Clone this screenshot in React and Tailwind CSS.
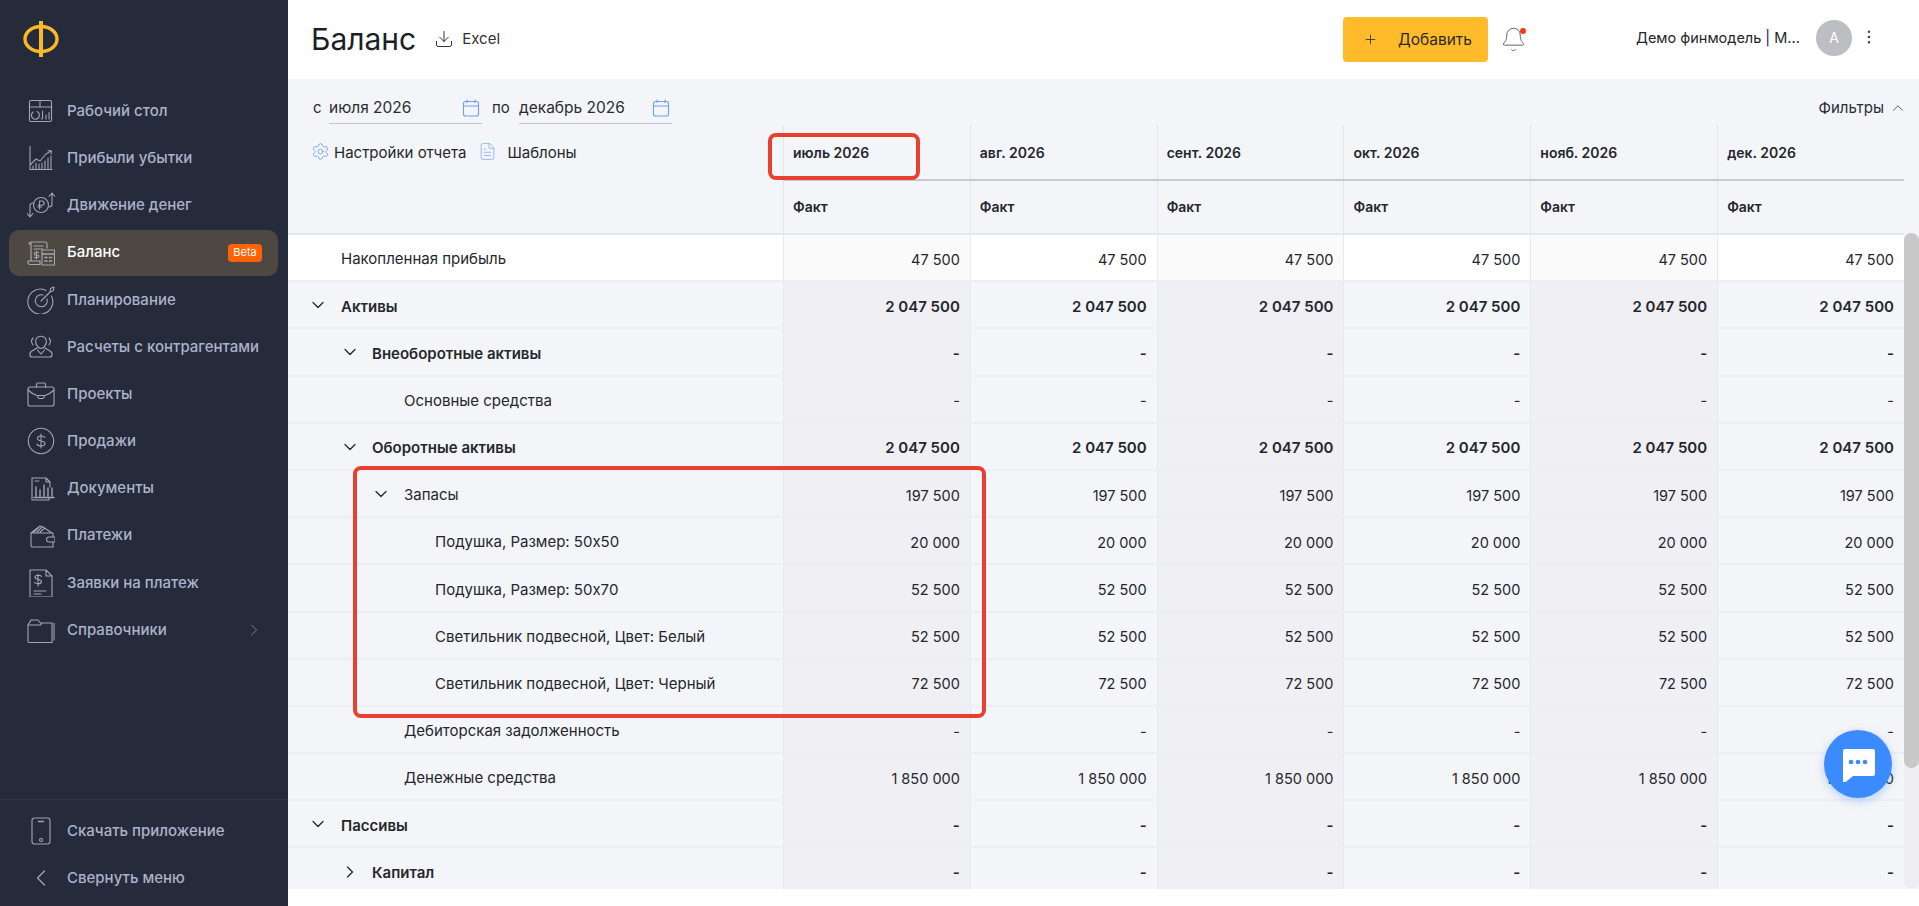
import React from "react";
import { ChevronDown, ChevronRight, ChevronLeft, ChevronUp, Plus, Download, Settings, FileText, Bell, EllipsisVertical } from "lucide-react";

const Ico = ({ children }) => (
  <svg width="28" height="28" viewBox="0 0 28 28" fill="none" stroke="#a3a6ae" strokeWidth="1.1" strokeLinecap="round" strokeLinejoin="round" className="shrink-0">
    {children}
  </svg>
);

const icons = {
  desk: (
    <Ico>
      <rect x="2.5" y="3.5" width="22" height="21" rx="1.5" />
      <path d="M2.5 10h22M13 3.5V10" />
      <path d="M6 15a4 4 0 1 0 4-.5M15.5 14v7a1 1 0 0 1-1 1M19 18v4M22 15.5V22" />
    </Ico>
  ),
  profit: (
    <Ico>
      <path d="M3 2.500v23h22M3 21l6-6 4 2 6-7 5-3M21 6.500l3.500.5-.5 3" />
      <path d="M6 25v-3M9 25v-6M12 25v-5M15 25v-6M18 25v-8M21 25v-11M24 25V12" />
    </Ico>
  ),
  money: (
    <Ico>
      <circle cx="14" cy="14" r="7.500" />
      <path d="M12.500 18v-8h2.500a2 2 0 0 1 0 4.200h-4M11 16h3.500" />
      <path d="M25 2l-3 3.500M25 2l3 3.500M25 2v11a3 3 0 0 1-3 3M3 26l-3-3.500M3 26l3-3.500M3 26V15a3 3 0 0 1 3-3" />
    </Ico>
  ),
  balance: (
    <Ico>
      <path d="M4 3h14a2 2 0 0 1 2 2v4M4 3a2 2 0 0 0-2 2h2M4 3v19M1 22h12v3.500H3a2 2 0 0 1-2-2zM7 7h9M7 10h9" strokeWidth="1.200" />
      <rect x="15" y="11" width="12.500" height="15" />
      <path d="M15 15h12.500M18 18.500h2M22.500 18.500h2M18 22h2M22.500 22h2" strokeWidth="1.600" />
      <path d="M9.500 12v8M11.500 13.500h-3a1.200 1.200 0 0 0 0 2.500h2a1.200 1.200 0 0 1 0 2.500h-3" />
    </Ico>
  ),
  plan: (
    <Ico>
      <path d="M19 4.500A12.500 12.500 0 1 0 24.500 10M16 9a6 6 0 1 0 4 4M14 15l9-9M23 6l.5-3.500L27 1l-.5 3.500L23 6" />
    </Ico>
  ),
  people: (
    <Ico>
      <path d="M10 12.500c-2-2-2-7 1-8.500 1.500-.7 4.500-.7 6 0 3 1.500 3 6.500 1 8.500-1 2-3 3-4 3s-3-1-4-3zM10 15l-5 3c-1.500.8-2.500 2-2 4 0 1 1 2 2 2h18c1 0 2-1 2-2 .5-2-.5-3.200-2-4l-5-3M10.500 17l3.500 4 3.500-4" />
      <path d="M6 5c-2 2-1.500 5 0 7M22 5c2 2 1.500 5 0 7" />
    </Ico>
  ),
  case: (
    <Ico>
      <rect x="1" y="7" width="26" height="19" rx="2" />
      <path d="M9.500 7V4.500a1.500 1.500 0 0 1 1.500-1.500h6a1.500 1.500 0 0 1 1.500 1.500V7M1 10c3 3 7 5 10 6M27 10c-3 3-7 5-10 6M11 15.500h6v1.500a1.500 1.500 0 0 1-1.500 1.500h-3A1.500 1.500 0 0 1 11 17z" />
    </Ico>
  ),
  sales: (
    <Ico>
      <circle cx="14" cy="14" r="12.700" />
      <path d="M14 7v14M18 10.500c-.5-1-2-1.500-4-1.500-2.500 0-3.500 1.500-3.500 2.500 0 3.500 7.500 1.500 7.500 5 0 1.500-1.500 2.500-4 2.500-2 0-3.500-.7-4-2" />
    </Ico>
  ),
  docs: (
    <Ico>
      <path d="M19 3H5v22h17v-2M19 3l4 4h-4zM23 7v5M8 6h4" />
      <path d="M9 12v9M13 15v6M17 10v11M21 13v8M25 13v8M7 22.500h20" strokeWidth="1.400" />
    </Ico>
  ),
  wallet: (
    <Ico>
      <path d="M4 11V23a2 2 0 0 0 2 2h20v-5M4 11h22v4M4 11l9-7 3 1 9 6M7 10l5-5M10 10l5-5M13 10l5-4M22 15h6v5h-6a2.500 2.500 0 0 1 0-5z" />
    </Ico>
  ),
  request: (
    <Ico>
      <path d="M3 1h16l6 6v21H3zM19 1v6h6M7 22h12M7 25h7" />
      <path d="M11 5v12M14.500 7.500c-.5-.8-1.700-1.200-3.500-1.200-2 0-3 1-3 2 0 3 6.500 1.500 6.500 4.500 0 1-1 2-3.500 2-2 0-3-.6-3.500-1.500" />
    </Ico>
  ),
  folder: (
    <Ico>
      <path d="M1 9v16a1.500 1.500 0 0 0 1.500 1.500H25V7H13.500L11 4H4L1 9h12.500L15 7M27 7v17" />
    </Ico>
  ),
};

const nav = [
  ["desk", "Рабочий стол"],
  ["profit", "Прибыли убытки"],
  ["money", "Движение денег"],
  ["balance", "Баланс", true],
  ["plan", "Планирование"],
  ["people", "Расчеты с контрагентами"],
  ["case", "Проекты"],
  ["sales", "Продажи"],
  ["docs", "Документы"],
  ["wallet", "Платежи"],
  ["request", "Заявки на платеж"],
  ["folder", "Справочники"],
];

function Sidebar() {
  return (
    <aside className="w-[288px] shrink-0 h-full bg-[#252b3a] flex flex-col">
      <div className="h-[87px] pl-[23px] pt-[21px] shrink-0">
        <svg width="36" height="36" viewBox="0 0 36 36" fill="none" stroke="#fdb827" strokeWidth="3.400">
          <ellipse cx="18" cy="18" rx="16" ry="12.500" />
          <path d="M18 0v36" strokeWidth="4" />
        </svg>
      </div>
      <nav className="flex flex-col pl-[9px] pr-[10px] pt-[1px] gap-[1.200px]">
        {nav.map(([icon, label, active]) => (
          <div
            key={label}
            className={`h-[46px] flex items-center gap-[12px] pl-[18px] rounded-[10px] ${active ? "bg-[#4d4842]" : ""}`}
          >
            {icons[icon]}
            <span className={`text-[15px] font-medium ${active ? "text-white" : "text-[#aab3c9]"}`}>{label}</span>
            {active && (
              <span className="ml-auto mr-[16px] h-[18px] w-[34px] rounded-[4px] bg-[#ff6207] text-white text-[11px] flex items-center justify-center">
                Beta
              </span>
            )}
            {icon === "folder" && <ChevronRight size={20} strokeWidth={1} className="ml-auto mr-[14px] text-[#8d93a0]" />}
          </div>
        ))}
      </nav>
      <div className="mt-auto border-t border-[#2f3646] pt-[8px] pb-[5px] px-[9px] flex flex-col gap-[1.200px]">
        <div className="h-[46px] flex items-center gap-[12px] pl-[18px]">
          <Ico>
            <rect x="5" y="1" width="18" height="26" rx="2.500" />
            <path d="M11.500 4.500h5" strokeWidth="1.500" />
            <circle cx="14" cy="23" r="1.500" />
          </Ico>
          <span className="text-[15px] font-medium text-[#aab3c9]">Скачать приложение</span>
        </div>
        <div className="h-[46px] flex items-center gap-[12px] pl-[18px]">
          <ChevronLeft size={28} strokeWidth={1.100} className="text-[#a3a6ae]" />
          <span className="text-[15px] font-medium text-[#aab3c9]">Свернуть меню</span>
        </div>
      </div>
    </aside>
  );
}

function Header() {
  return (
    <header className="h-[79px] shrink-0 bg-white flex items-center pl-[23px] pr-[41px]">
      <h1 className="text-[30px] text-[#1d1f26] leading-none -mt-[1px]">Баланс</h1>
      <Download size={20} strokeWidth={1.200} className="ml-[18px] -mt-[1px] text-[#333]" />
      <span className="ml-[8px] text-[15px] text-[#333]">Excel</span>
      <button className="ml-auto h-[45px] w-[145px] bg-[#ffbb29] rounded-[4px] flex items-center pl-[20px] text-[#2b2b2b] text-[15.500px]">
        <Plus size={15} strokeWidth={1.300} />
        <span className="ml-[20px]">Добавить</span>
      </button>
      <div className="relative ml-[12px] w-[28px] h-[28px]">
        <Bell size={27} strokeWidth={0.800} className="text-[#555]" />
        <span className="absolute right-[2px] top-[2px] w-[6px] h-[6px] rounded-full bg-[#f03a12]" />
      </div>
      <span className="ml-[108px] text-[14.500px] text-[#24262c] -mt-[4px] w-[170px] whitespace-nowrap">Демо финмодель | М...</span>
      <div className="ml-[10px] w-[36px] h-[36px] -mt-[4px] rounded-full bg-[#bdbec4] text-white text-[14px] flex items-center justify-center">A</div>
      <EllipsisVertical size={18} strokeWidth={1.500} className="ml-[8px] -mt-[6px] text-[#444]" />
    </header>
  );
}

const DateField = ({ value }) => (
  <div className="w-[153px] h-[32px] border-b border-[#c4c5cb] flex items-center justify-between pr-[2px]">
    <span className="text-[15.500px] text-[#2a2c33]">{value}</span>
    <svg width="18" height="18" viewBox="0 0 18 18" fill="none" stroke="#6aa0f5" strokeWidth="1.100">
      <rect x="1.500" y="2.500" width="15" height="14.500" rx="2" />
      <path d="M1.500 7h15M5 .5v3.500M13 .5v3.500" />
    </svg>
  </div>
);

const months = ["июль 2026", "авг. 2026", "сент. 2026", "окт. 2026", "нояб. 2026", "дек. 2026"];

const rows = [
  { label: "Накопленная прибыль", level: 0, value: "47 500", first: true },
  { label: "Активы", level: 0, value: "2 047 500", bold: true, arrow: "down" },
  { label: "Внеоборотные активы", level: 1, value: "-", bold: true, arrow: "down" },
  { label: "Основные средства", level: 2, value: "-" },
  { label: "Оборотные активы", level: 1, value: "2 047 500", bold: true, arrow: "down" },
  { label: "Запасы", level: 2, value: "197 500", arrow: "down" },
  { label: "Подушка, Размер: 50x50", level: 3, value: "20 000" },
  { label: "Подушка, Размер: 50x70", level: 3, value: "52 500" },
  { label: "Светильник подвесной, Цвет: Белый", level: 3, value: "52 500" },
  { label: "Светильник подвесной, Цвет: Черный", level: 3, value: "72 500" },
  { label: "Дебиторская задолженность", level: 2, value: "-" },
  { label: "Денежные средства", level: 2, value: "1 850 000" },
  { label: "Пассивы", level: 0, value: "-", bold: true, arrow: "down" },
  { label: "Капитал", level: 1, value: "-", bold: true, arrow: "right" },
];

const indents = ["pl-[53px]", "pl-[84px]", "pl-[116px]", "pl-[147px]"];
const arrowLeft = ["left-[20px]", "left-[52px]", "left-[83px]"];

function Row({ row }) {
  const weight = row.bold ? "font-semibold" : "";
  return (
    <div className={`h-[47.200px] shrink-0 flex border-b-2 border-[#edeef1] text-[#25272e] ${row.first ? "bg-white" : "bg-[#f4f5f8]"}`}>
      <div className={`relative w-[495px] shrink-0 flex items-center pt-[4px] text-[15px] ${indents[row.level]} ${weight}`}>
        {row.arrow === "down" && <ChevronDown size={20} strokeWidth={1.500} className={`absolute -mt-[3px] ${arrowLeft[row.level]} text-[#25272e]`} />}
        {row.arrow === "right" && <ChevronRight size={20} strokeWidth={1.500} className={`absolute -mt-[3px] ${arrowLeft[row.level]} text-[#25272e]`} />}
        {row.label}
      </div>
      {months.map((m, i) => (
        <div
          key={m}
          className={`flex-1 flex items-center justify-end pr-[10px] pt-[4px] border-l border-[#e8e9ed] ${row.bold ? "text-[15px] font-semibold" : "text-[14.500px]"} ${
            i % 2 === 0 ? (row.first ? "bg-[#fafafa]" : "bg-[#efeff4]") : ""
          }`}
        >
          {row.value}
        </div>
      ))}
    </div>
  );
}

function Table() {
  return (
    <div className="relative flex-1 min-h-0 flex overflow-hidden">
      <div className="flex-1 min-w-0 flex flex-col">
        <div className="h-[110px] shrink-0 flex border-b-2 border-[#e6e7eb]">
          <div className="w-[495px] shrink-0 flex items-start pl-[23px] pt-[17px] gap-[4px] text-[15px] text-[#25272e]">
            <Settings size={19} strokeWidth={1} className="text-[#5c97f2]" />
            <span>Настройки отчета</span>
            <FileText size={19} strokeWidth={1} className="ml-[8px] text-[#7eaef5]" />
            <span className="ml-[6px]">Шаблоны</span>
          </div>
          <div className="flex-1 flex flex-col">
            <div className="h-[56px] flex border-b-2 border-[#c8c9ce]">
              {months.map((m) => (
                <div key={m} className="flex-1 flex items-center pl-[9px] border-l border-[#e4e5ea] text-[14px] font-semibold text-[#25272e]">{m}</div>
              ))}
            </div>
            <div className="flex-1 flex">
              {months.map((m) => (
                <div key={m} className="flex-1 flex items-center pl-[9px] pb-[2px] border-l border-[#e4e5ea] text-[14px] font-semibold text-[#25272e]">Факт</div>
              ))}
            </div>
          </div>
        </div>
        <div className="flex-1 min-h-0 overflow-hidden flex flex-col">
          {rows.map((row) => <Row key={row.label} row={row} />)}
        </div>
      </div>
      <div className="w-[15px] shrink-0 flex flex-col">
        <div className="h-[108px] shrink-0" />
        <div className="flex-1 bg-[#eeeef0] rounded-full relative">
          <div className="absolute inset-x-0 top-0 h-[535px] bg-[#c8c8c8] rounded-full" />
        </div>
      </div>
    </div>
  );
}

export default function App() {
  return (
    <div className="relative h-[906px] w-[1919px] overflow-hidden flex bg-white" style={{ fontFamily: "Inter, 'Noto Sans', sans-serif" }}>
      <Sidebar />
      <main className="flex-1 min-w-0 flex flex-col">
        <Header />
        <section className="h-[810px] shrink-0 bg-[#f4f5f8] flex flex-col">
          <div className="h-[46px] shrink-0 flex items-start pt-[13px] pl-[25px] pr-[12px] text-[15px] text-[#2a2c33]">
            <span className="w-[16px] mt-[5px]">с</span>
            <DateField value="июля 2026" />
            <span className="ml-[10px] w-[27px] mt-[5px]">по</span>
            <DateField value="декабрь 2026" />
            <div className="ml-auto mt-[5px] flex items-center gap-[5px]">
              <span>Фильтры</span>
              <ChevronUp size={18} strokeWidth={1} />
            </div>
          </div>
          <Table />
        </section>
        <div className="flex-1 bg-white" />
      </main>

      {/* red annotation boxes */}
      <div className="absolute left-[768px] top-[133px] w-[152px] h-[47px] border-[4px] border-[#e8402f] rounded-[8px]" />
      <div className="absolute left-[353px] top-[466px] w-[633px] h-[252px] border-[4px] border-[#e8402f] rounded-[8px]" />

      <div className="absolute left-[1824px] top-[730px] w-[68px] h-[68px] rounded-full bg-[#3b8bff] shadow-[0_3px_10px_rgba(59,139,255,0.35)] flex items-center justify-center">
        <svg width="36" height="36" viewBox="0 0 36 36" fill="white">
          <path d="M3 3h30a2 2 0 0 1 2 2v23a2 2 0 0 1-2 2H13l-8 6.500c-1 .7-2 0-2-1V5a2 2 0 0 1 2-2z" />
          <circle cx="11" cy="16" r="2.300" fill="#3b8bff" />
          <circle cx="18" cy="16" r="2.300" fill="#3b8bff" />
          <circle cx="25" cy="16" r="2.300" fill="#3b8bff" />
        </svg>
      </div>
    </div>
  );
}
